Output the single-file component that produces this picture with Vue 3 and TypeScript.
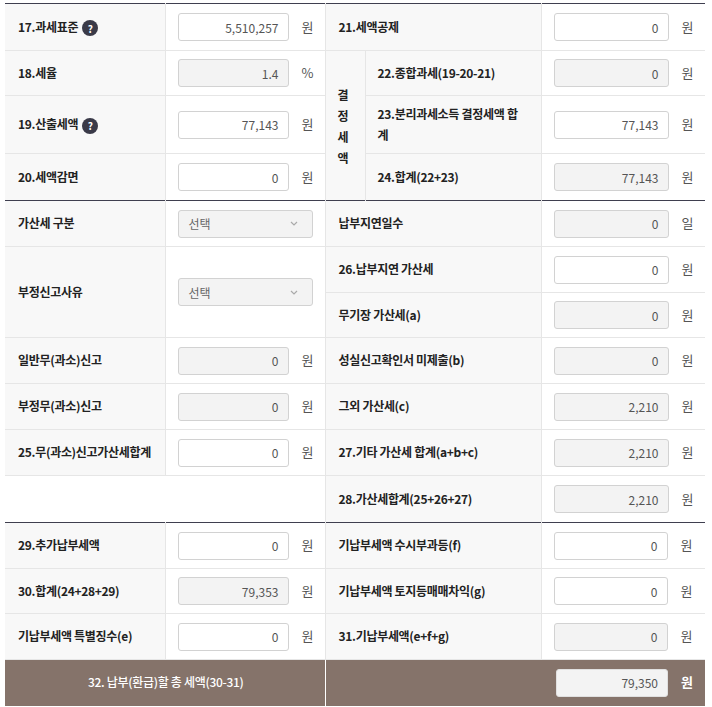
<script setup lang="ts">
interface Field { label?: string; help?: boolean; value?: string; ro?: boolean; unit?: string; select?: boolean }
const sec1: { h: number; l: Field; group?: boolean; r: Field }[] = [
  { h: 47, l: { label: '17.과세표준', help: true, value: '5,510,257', unit: '원' }, r: { label: '21.세액공제', value: '0', unit: '원' } },
  { h: 45, group: true, l: { label: '18.세율', value: '1.4', ro: true, unit: '%' }, r: { label: '22.종합과세(19-20-21)', value: '0', ro: true, unit: '원' } },
  { h: 58, group: true, l: { label: '19.산출세액', help: true, value: '77,143', unit: '원' }, r: { label: '23.분리과세소득 결정세액 합계', value: '77,143', unit: '원' } },
  { h: 47, group: true, l: { label: '20.세액감면', value: '0', unit: '원' }, r: { label: '24.합계(22+23)', value: '77,143', ro: true, unit: '원' } },
]
const sec2: { h: number; l?: Field; skip?: boolean; span?: number; dark?: boolean; tail?: boolean; r: Field }[] = [
  { h: 46, dark: true, l: { label: '가산세 구분', select: true }, r: { label: '납부지연일수', value: '0', ro: true, unit: '일' } },
  { h: 46, span: 2, l: { label: '부정신고사유', select: true }, r: { label: '26.납부지연 가산세', value: '0', unit: '원' } },
  { h: 45, skip: true, r: { label: '무기장 가산세(a)', value: '0', ro: true, unit: '원' } },
  { h: 46, l: { label: '일반무(과소)신고', value: '0', ro: true, unit: '원' }, r: { label: '성실신고확인서 미제출(b)', value: '0', ro: true, unit: '원' } },
  { h: 46, l: { label: '부정무(과소)신고', value: '0', ro: true, unit: '원' }, r: { label: '그외 가산세(c)', value: '2,210', ro: true, unit: '원' } },
  { h: 46, l: { label: '25.무(과소)신고가산세합계', value: '0', unit: '원' }, r: { label: '27.기타 가산세 합계(a+b+c)', value: '2,210', ro: true, unit: '원' } },
  { h: 47, r: { label: '28.가산세합계(25+26+27)', value: '2,210', ro: true, unit: '원' } },
  { h: 46, dark: true, tail: true, l: { label: '29.추가납부세액', value: '0', unit: '원' }, r: { label: '기납부세액 수시부과등(f)', value: '0', unit: '원' } },
  { h: 45, tail: true, l: { label: '30.합계(24+28+29)', value: '79,353', ro: true, unit: '원' }, r: { label: '기납부세액 토지등매매차익(g)', value: '0', unit: '원' } },
  { h: 46, tail: true, l: { label: '기납부세액 특별징수(e)', value: '0', unit: '원' }, r: { label: '31.기납부세액(e+f+g)', value: '0', ro: true, unit: '원' } },
]
</script>

<template>
  <div class="page">
    <table class="grid">
      <colgroup>
        <col class="c1" /><col class="c2" /><col class="c3" /><col class="c4" /><col class="c5" />
      </colgroup>
      <tbody>
        <tr v-for="(row, i) in sec1" :key="'a' + i" :class="{ dark: i === 0 }" :style="{ height: row.h + 'px' }">
          <th class="label">
            <span class="lab">{{ row.l.label }}</span>
            <span v-if="row.l.help" class="help">?</span>
          </th>
          <td class="field">
            <div class="wrap">
              <input class="num left" :class="{ ro: row.l.ro }" :value="row.l.value" :readonly="row.l.ro" />
              <span class="unit">{{ row.l.unit }}</span>
            </div>
          </td>
          <th v-if="i === 1" rowspan="3" class="label vert">
            <span>결</span><span>정</span><span>세</span><span>액</span>
          </th>
          <th class="label" :class="{ inner: row.group }" :colspan="row.group ? 1 : 2">{{ row.r.label }}</th>
          <td class="field">
            <div class="wrap">
              <input class="num" :class="{ ro: row.r.ro }" :value="row.r.value" :readonly="row.r.ro" />
              <span class="unit">{{ row.r.unit }}</span>
            </div>
          </td>
        </tr>
        <tr v-for="(row, i) in sec2" :key="'b' + i" :class="{ dark: row.dark, tail: row.tail }" :style="{ height: row.h + 'px' }">
          <template v-if="row.l">
            <th class="label" :rowspan="row.span || 1">{{ row.l.label }}</th>
            <td class="field" :rowspan="row.span || 1">
              <div v-if="row.l.select" class="sel">
                <span>선택</span>
                <svg width="8" height="5" viewBox="0 0 8 5"><path d="M1 1l3 3 3-3" fill="none" stroke="#aaa" stroke-width="1.2" /></svg>
              </div>
              <div v-else class="wrap">
                <input class="num left" :class="{ ro: row.l.ro }" :value="row.l.value" :readonly="row.l.ro" />
                <span class="unit">{{ row.l.unit }}</span>
              </div>
            </td>
          </template>
          <td v-else-if="!row.skip" colspan="2" class="blank"></td>
          <th class="label" colspan="2">{{ row.r.label }}</th>
          <td class="field">
            <div class="wrap">
              <input class="num" :class="{ ro: row.r.ro }" :value="row.r.value" :readonly="row.r.ro" />
              <span class="unit">{{ row.r.unit }}</span>
            </div>
          </td>
        </tr>
        <tr class="total">
          <th colspan="2" class="t-label">32. 납부(환급)할 총 세액(30-31)</th>
          <td colspan="3" class="t-field">
            <div class="t-wrap">
              <input class="num t-num" value="79,350" readonly />
              <span class="t-unit">원</span>
            </div>
          </td>
        </tr>
      </tbody>
    </table>
  </div>
</template>

<style>
html, body { margin: 0; background: #fff; }
</style>

<style scoped>
.page {
  padding: 3px 7px 0 5px;
  font-family: "Noto Sans CJK KR", "Noto Sans", sans-serif;
  font-size: 12px;
  color: #222;
}
.grid {
  width: 700px;
  table-layout: fixed;
  border-collapse: collapse;
}
.c1 { width: 160px; }
.c2 { width: 160px; }
.c3 { width: 40px; }
.c4 { width: 176px; }
.c5 { width: 164px; }
th, td {
  padding: 0;
  border-top: 1px solid #e6e6e6;
  border-right: 1px solid #e6e6e6;
}
tr > :last-child { border-right: 0; }
.dark > th, .dark > td { border-top: 1px solid #3f3f4f; }
.label {
  background: #f8f8f8;
  padding: 0 12px 2px 13px;
  text-align: left;
  font-weight: 700;
  font-size: 12px;
  line-height: 21px;
  letter-spacing: -0.3px;
  color: #222;
}
.inner { padding-left: 12px; padding-right: 20px; }
.vert { padding: 0 0 0 12px; }
.vert span { display: block; }
.help {
  display: inline-flex;
  align-items: center;
  justify-content: center;
  width: 16px;
  height: 16px;
  border-radius: 50%;
  background: #3a3a48;
  color: #fff;
  font-size: 10px;
  margin-left: 4px;
  vertical-align: -1px;
}
.field { background: #fff; }
.wrap {
  display: flex;
  align-items: center;
  padding-left: 12px;
}
.num {
  box-sizing: border-box;
  width: 115px;
  height: 28px;
  border: 1px solid #d2d2d2;
  border-radius: 3px;
  background: #fff;
  text-align: right;
  padding: 0 9px 0 10px;
  font: 400 12px "Noto Sans CJK KR", "Noto Sans", sans-serif;
  color: #555;
  outline: none;
}
.num.left { width: 111px; }
.tail .num:not(.left) { width: 114px; }
.num.ro { background: #f3f3f3; }
.unit {
  margin-left: 13px;
  margin-top: -2px;
  font-size: 13px;
  color: #555;
}
.sel {
  box-sizing: border-box;
  margin-left: 12px;
  width: 135px;
  height: 28px;
  border: 1px solid #d2d2d2;
  border-radius: 3px;
  background: #f3f3f3;
  display: flex;
  align-items: center;
  justify-content: space-between;
  padding: 0 14px 0 10px;
  color: #666;
  font-size: 12px;
}
.blank { background: #fff; }
.total { height: 46px; background: #85736a; color: #fff; }
.total th, .total td { border-top: 1px solid #e6e6e6; border-right: 1px solid #fff; }
.total td { border-right: 0; }
.t-label {
  font-weight: 500;
  font-size: 12px;
  letter-spacing: -0.3px;
  text-align: center;
  padding: 0 0 2px 2px;
}
.t-wrap { display: flex; align-items: center; justify-content: flex-end; padding-right: 12px; }
.t-num { width: 112px; background: #f3f3f3; color: #555; border-color: #e0e0e0; }
.t-unit { margin-left: 13px; margin-top: -2px; font-weight: 700; font-size: 13px; color: #fff; }
</style>
